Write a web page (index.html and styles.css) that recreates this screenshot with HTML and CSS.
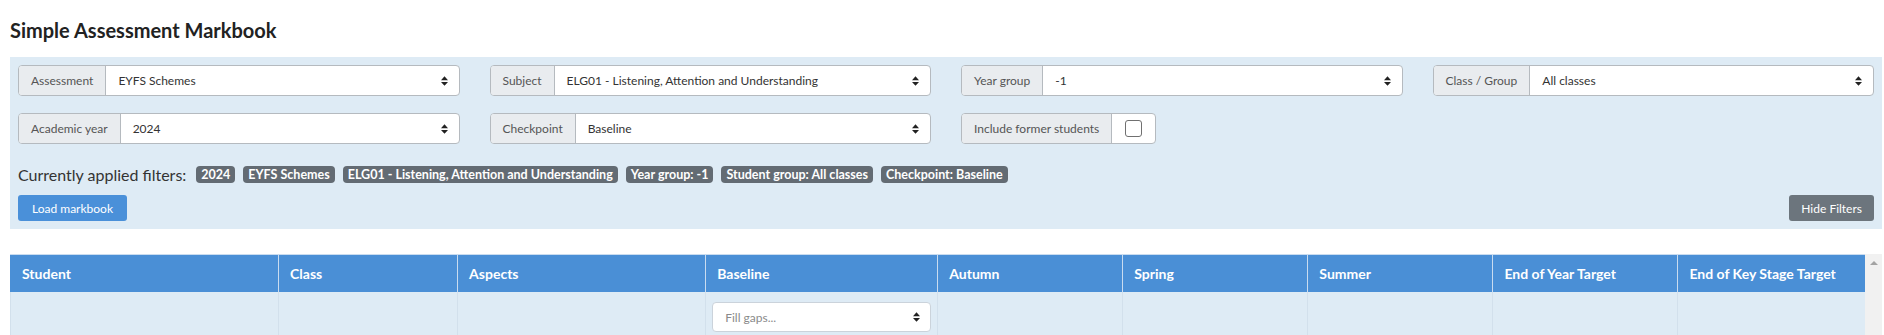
FILE: index.html
```html
<html>
<head>
<meta charset="utf-8">
<meta name="viewport" content="width=device-width, initial-scale=1.0">
<title>Simple Assessment Markbook</title>
<link rel="stylesheet" href="styles.css">
</head>
<body>
<h1 class='page-title'>Simple Assessment Markbook</h1>
<div class='filter-panel'>
  <div class='filter-grid'>
    <div class='input-group'>
      <span class='addon'>Assessment</span>
      <div class='select'>EYFS Schemes
        <svg class='arrows' viewBox='0 0 8 11'><path d='M0 4.5L4 0L8 4.5Z M0 6.5L4 11L8 6.5Z'/></svg>
      </div>
    </div>
    <div class='input-group'>
      <span class='addon'>Subject</span>
      <div class='select'>ELG01 - Listening, Attention and Understanding
        <svg class='arrows' viewBox='0 0 8 11'><path d='M0 4.5L4 0L8 4.5Z M0 6.5L4 11L8 6.5Z'/></svg>
      </div>
    </div>
    <div class='input-group'>
      <span class='addon'>Year group</span>
      <div class='select'>-1
        <svg class='arrows' viewBox='0 0 8 11'><path d='M0 4.5L4 0L8 4.5Z M0 6.5L4 11L8 6.5Z'/></svg>
      </div>
    </div>
    <div class='input-group'>
      <span class='addon'>Class / Group</span>
      <div class='select'>All classes
        <svg class='arrows' viewBox='0 0 8 11'><path d='M0 4.5L4 0L8 4.5Z M0 6.5L4 11L8 6.5Z'/></svg>
      </div>
    </div>
    <div class='input-group'>
      <span class='addon'>Academic year</span>
      <div class='select'>2024
        <svg class='arrows' viewBox='0 0 8 11'><path d='M0 4.5L4 0L8 4.5Z M0 6.5L4 11L8 6.5Z'/></svg>
      </div>
    </div>
    <div class='input-group'>
      <span class='addon'>Checkpoint</span>
      <div class='select'>Baseline
        <svg class='arrows' viewBox='0 0 8 11'><path d='M0 4.5L4 0L8 4.5Z M0 6.5L4 11L8 6.5Z'/></svg>
      </div>
    </div>
    <div class='input-group compact'>
      <span class='addon'>Include former students</span>
      <div class='check-cell'><span class='checkbox'></span></div>
    </div>
  </div>
  <div class='applied'>
    <span class='applied-label'>Currently applied filters:</span>
    <span class='badge'>2024</span>
    <span class='badge'>EYFS Schemes</span>
    <span class='badge'>ELG01 - Listening, Attention and Understanding</span>
    <span class='badge'>Year group: -1</span>
    <span class='badge'>Student group: All classes</span>
    <span class='badge'>Checkpoint: Baseline</span>
  </div>
  <div class='actions'>
    <button type='button' class='btn btn-blue'>Load markbook</button>
    <button type='button' class='btn btn-grey'>Hide Filters</button>
  </div>
</div>
<div class='table-wrap'>
  <table class='markbook'>
    <colgroup>
      <col class='c-student'><col class='c-class'><col class='c-aspects'><col class='c-baseline'>
      <col class='c-term'><col class='c-term'><col class='c-term'><col class='c-term'><col class='c-last'>
    </colgroup>
    <thead>
      <tr>
        <th>Student</th>
        <th>Class</th>
        <th>Aspects</th>
        <th>Baseline</th>
        <th>Autumn</th>
        <th>Spring</th>
        <th>Summer</th>
        <th>End of Year Target</th>
        <th>End of Key Stage Target</th>
      </tr>
    </thead>
    <tbody>
      <tr>
        <td></td>
        <td></td>
        <td></td>
        <td>
          <div class='fill-select'>Fill gaps...
            <svg class='arrows' viewBox='0 0 8 11'><path d='M0 4.5L4 0L8 4.5Z M0 6.5L4 11L8 6.5Z'/></svg>
          </div>
        </td>
        <td></td>
        <td></td>
        <td></td>
        <td></td>
        <td></td>
      </tr>
    </tbody>
  </table>
  <div class='scrollbar'><span class='scroll-up'></span></div>
</div>
</body>
</html>
```

FILE: styles.css
```css
html {
  background: #fff;
}
body {
  margin: 0;
  padding: 0 2px 0 10px;
  font-family: Lato, "Open Sans", sans-serif;
  color: #333;
}
.page-title {
  margin: 16px 0 0;
  font-size: 20px;
  line-height: 28px;
  font-weight: 700;
  color: #222;
}
.filter-panel {
  margin-top: 13px;
  padding: 8px;
  background: #deebf5;
}
.filter-grid {
  display: grid;
  grid-template-columns: repeat(4, 1fr);
  column-gap: 30px;
  row-gap: 17px;
}
.input-group {
  display: flex;
  height: 31px;
  box-sizing: border-box;
  border: 1px solid #b5babf;
  border-radius: 4px;
  overflow: hidden;
  background: #fff;
  font-size: 12px;
}
.input-group.compact {
  justify-self: start;
}
.addon {
  display: flex;
  align-items: center;
  padding: 0 12px;
  background: #e9ecef;
  color: #555;
  border-right: 1px solid #b5babf;
}
.select {
  flex: 1;
  display: flex;
  align-items: center;
  justify-content: space-between;
  padding: 0 11px 0 12px;
  color: #333;
}
.arrows {
  width: 7px;
  height: 10px;
  fill: #222;
}
.check-cell {
  display: flex;
  align-items: center;
  justify-content: center;
  width: 43px;
}
.checkbox {
  width: 15px;
  height: 15px;
  border: 1px solid #707070;
  border-radius: 3px;
  background: #fff;
}
.applied {
  display: flex;
  align-items: center;
  gap: 8px;
  height: 22px;
  margin-top: 19px;
}
.applied-label {
  font-size: 16px;
  color: #333;
  margin-right: 2px;
}
.badge {
  padding: 2px 5px;
  border-radius: 4px;
  background: #636b73;
  color: #fff;
  font-size: 12.5px;
  line-height: 13px;
  font-weight: 700;
}
.actions {
  display: flex;
  justify-content: space-between;
  margin-top: 10px;
}
.btn {
  height: 26px;
  padding: 0 14px;
  border: none;
  border-radius: 3px;
  font-family: Lato, "Open Sans", sans-serif;
  font-size: 12px;
  color: #fff;
}
.btn-blue {
  background: #4a90d9;
}
.btn-grey {
  padding: 0 12px;
  background: #6c757d;
}
.table-wrap {
  display: flex;
  margin-top: 25px;
}
.markbook {
  width: 1855px;
  table-layout: fixed;
  border-collapse: collapse;
  font-size: 14px;
}
.c-student { width: 268px; }
.c-class { width: 179px; }
.c-aspects { width: 248px; }
.c-baseline { width: 232px; }
.c-term { width: 185px; }
.c-last { width: 187px; }
.markbook th {
  height: 37px;
  box-sizing: border-box;
  padding: 0 11px;
  text-align: left;
  background: #4a8fd6;
  color: #fff;
  font-weight: 700;
  border-left: 1px solid #c9dcf0;
  border-top: 1px solid #c9dcf0;
}
.markbook th:first-child {
  border-left-color: #4a8fd6;
}
.markbook td {
  height: 44px;
  padding: 0 6px;
  background: #deebf5;
  border-left: 1px solid #d2e0ec;
  border-bottom: 1px solid #d2e0ec;
}
.fill-select {
  display: flex;
  align-items: center;
  justify-content: space-between;
  height: 30px;
  box-sizing: border-box;
  padding: 0 10px 0 12px;
  border: 1px solid #cbd3db;
  border-radius: 4px;
  background: #fff;
  color: #8a8a8a;
  font-size: 12px;
}
.scrollbar {
  width: 17px;
  height: 90px;
  background: #f1f1f1;
  display: flex;
  justify-content: center;
}
.scroll-up {
  margin-top: 7px;
  width: 0;
  height: 0;
  border-left: 4px solid transparent;
  border-right: 4px solid transparent;
  border-bottom: 4px solid #a3a3a3;
}
```
